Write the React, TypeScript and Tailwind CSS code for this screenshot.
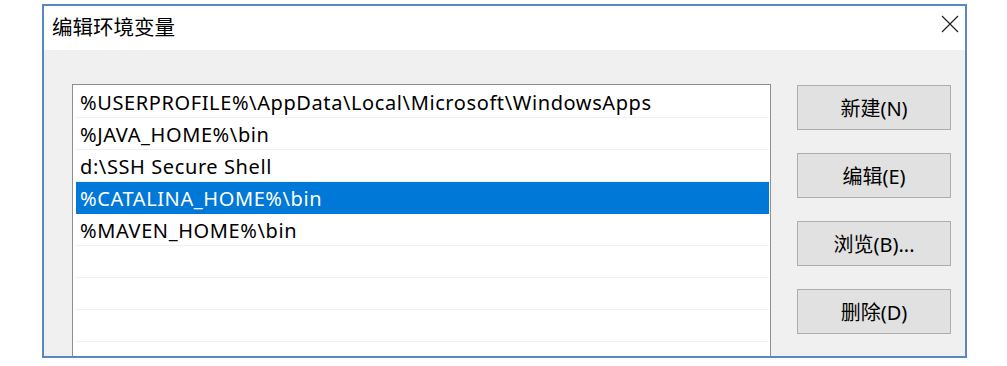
const paths = [
  "%USERPROFILE%\\AppData\\Local\\Microsoft\\WindowsApps",
  "%JAVA_HOME%\\bin",
  "d:\\SSH Secure Shell",
  "%CATALINA_HOME%\\bin",
  "%MAVEN_HOME%\\bin",
  "",
  "",
  "",
  "",
];

const buttons = ["新建(N)", "编辑(E)", "浏览(B)...", "删除(D)"];

const font = { fontFamily: '"Noto Sans", "Noto Sans CJK SC", sans-serif' };

export default function App() {
  const selected = 3;

  return (
    <div className="w-[1007px] h-[366px] bg-white overflow-hidden pl-[42px] pt-[4px]" style={font}>
      <div className="w-[925px] h-[354px] border-2 border-[#5a87c1] flex flex-col overflow-hidden">
        <div className="h-[44px] bg-white flex items-center justify-between pl-[8px] pr-[6px] shrink-0">
          <span className="text-[20.5px] text-black leading-none -mt-[4px]" style={{ fontFamily: '"Noto Sans CJK SC", sans-serif' }}>编辑环境变量</span>
          <svg width="18" height="18" viewBox="0 0 18 18" className="-mt-[8px]">
            <path d="M1 1 L17 17 M17 1 L1 17" stroke="#222" strokeWidth="1.2" fill="none" />
          </svg>
        </div>
        <div className="flex-1 bg-[#f0f0f0] flex pl-[28px] pt-[34px] gap-[26px] overflow-hidden">
          <div className="w-[699px] h-[320px] shrink-0 bg-white border border-[#8e8e8e] pt-[1px] pl-[3px] pr-[1px]">
            {paths.map((p, i) => (
              <div
                key={i}
                className={
                  "h-[32px] flex items-center pl-[4px] pt-[2px] text-[20px] tracking-[0.6px] leading-none " +
                  (i === selected ? "bg-[#0078d7] text-white" : "text-black border-b border-[#f0f0f0]")
                }
              >
                {p}
              </div>
            ))}
          </div>
          <div className="flex flex-col gap-[23px] pt-[1px]">
            {buttons.map((b) => (
              <button
                key={b}
                className="w-[154px] h-[45px] bg-[#e1e1e1] border border-[#adadad] text-[20px] text-black flex items-center justify-center pt-[2px]"
              >
                {b}
              </button>
            ))}
          </div>
        </div>
      </div>
    </div>
  );
}
